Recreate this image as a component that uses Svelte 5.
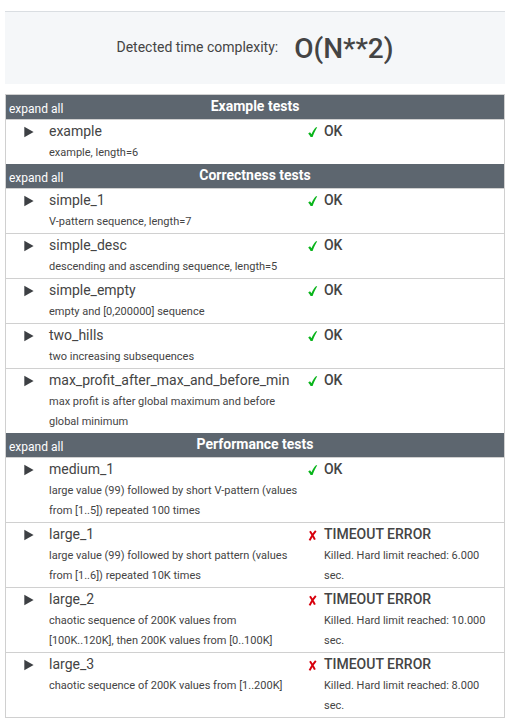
<script>
  const groups = [
    {
      title: 'Example tests',
      tests: [{ name: 'example', info: 'example, length=6', ok: true }]
    },
    {
      title: 'Correctness tests',
      tests: [
        { name: 'simple_1', info: 'V-pattern sequence, length=7', ok: true },
        { name: 'simple_desc', info: 'descending and ascending sequence, length=5', ok: true },
        { name: 'simple_empty', info: 'empty and [0,200000] sequence', ok: true },
        { name: 'two_hills', info: 'two increasing subsequences', ok: true },
        {
          name: 'max_profit_after_max_and_before_min',
          info: 'max profit is after global maximum and before global minimum',
          ok: true
        }
      ]
    },
    {
      title: 'Performance tests',
      tests: [
        {
          name: 'medium_1',
          info: 'large value (99) followed by short V-pattern (values from [1..5]) repeated 100 times',
          ok: true
        },
        {
          name: 'large_1',
          info: 'large value (99) followed by short pattern (values from [1..6]) repeated 10K times',
          ok: false,
          limit: '6.000'
        },
        {
          name: 'large_2',
          info: 'chaotic sequence of 200K values from [100K..120K], then 200K values from [0..100K]',
          ok: false,
          limit: '10.000'
        },
        {
          name: 'large_3',
          info: 'chaotic sequence of 200K values from [1..200K]',
          ok: false,
          limit: '8.000'
        }
      ]
    }
  ];
</script>

<main>
  <section class="complexity">
    <span>Detected time complexity:</span>
    <strong>O(N**2)</strong>
  </section>

  <table>
    <colgroup>
      <col class="col-toggle" />
      <col class="col-name" />
      <col class="col-mark" />
      <col class="col-result" />
    </colgroup>
    {#each groups as group}
      <tbody>
        <tr class="group">
          <th colspan="4" scope="rowgroup">
            <div class="bar">
              <button type="button" class="expand">expand all</button>
              <span>{group.title}</span>
            </div>
          </th>
        </tr>
        {#each group.tests as test}
          <tr class="test">
            <td class="toggle">
              <button type="button" aria-label="Expand {test.name}">
                <svg width="10" height="12" viewBox="0 0 10 12" aria-hidden="true">
                  <path d="M0.3 0.8 L9.6 6 L0.3 11.2 Z" fill="#3d4044" />
                </svg>
              </button>
            </td>
            <td>
              <div class="name">{test.name}</div>
              <div class="info">{test.info}</div>
            </td>
            <td class="mark">
              {#if test.ok}
                <svg width="10" height="12" viewBox="0 0 10 12" aria-hidden="true">
                  <path d="M0.2 7.4 L2 6.2 L3.5 8.2 C4.6 5.4 6 3.2 8 1.2 L9.2 1.2 C7.5 4 6 7.2 4.6 11 L2.6 11 C2 9.6 1.3 8.4 0.2 7.4 Z" fill="#08b41a" />
                </svg>
              {:else}
                <svg width="10" height="12" viewBox="0 0 10 12" aria-hidden="true">
                  <path d="M2 2.3 C3.8 4.9 5.4 7.6 6.9 10.6 M7.8 1.8 C5.4 4.5 3.2 7.7 1.6 11.4" fill="none" stroke="#d8000c" stroke-width="2" />
                </svg>
              {/if}
            </td>
            <td>
              <div class="status">{test.ok ? 'OK' : 'TIMEOUT ERROR'}</div>
              {#if test.limit}
                <div class="info">Killed. Hard limit reached: {test.limit} sec.</div>
              {/if}
            </td>
          </tr>
        {/each}
      </tbody>
    {/each}
  </table>
</main>

<style>
  :global(body) {
    margin: 0;
    background: #fff;
  }

  main {
    padding: 11px 7px 6px 5px;
    font-family: Roboto, 'Liberation Sans', sans-serif;
    font-size: 14px;
    color: #444;
  }

  .complexity {
    display: flex;
    align-items: flex-start;
    justify-content: center;
    gap: 16px;
    padding: 17px 0 15px;
    margin-bottom: 10px;
    border-top: 1px solid #dadee2;
    background: #f5f7f9;
    line-height: 36px;
  }

  .complexity strong {
    font-size: 28px;
    font-weight: 500;
    line-height: 40px;
  }

  table {
    width: 100%;
    table-layout: fixed;
    border: 1px solid #d0d0d0;
    border-spacing: 0;
  }

  .col-toggle {
    width: 43px;
  }

  .col-name {
    width: 52%;
  }

  .col-mark {
    width: 16px;
  }

  th,
  td {
    padding: 0;
    vertical-align: top;
    text-align: left;
  }

  td {
    padding-bottom: 1px;
  }

  th {
    border-bottom: 1px solid #d0d0d0;
    background: #5d666f;
    color: #fff;
  }

  .bar {
    display: grid;
    grid-template-columns: 1fr auto 1fr;
    padding: 0 3px;
    line-height: 22px;
    height: 24px;
  }

  button {
    border: 0;
    padding: 0;
    background: none;
    font: inherit;
    color: inherit;
    cursor: pointer;
  }

  .expand {
    justify-self: start;
    align-self: end;
    font-size: 12px;
    font-weight: 400;
    line-height: 20px;
  }

  .test + .test td {
    border-top: 1px solid #d0d0d0;
  }

  .toggle button {
    display: block;
    padding: 6px 0 0 18px;
  }

  svg {
    display: block;
  }

  .mark svg {
    margin-top: 6px;
  }

  .name,
  .status {
    padding-bottom: 1px;
    line-height: 22px;
  }

  .status {
    font-weight: 500;
  }

  .info {
    padding-right: 8px;
    font-size: 11px;
    line-height: 20px;
  }
</style>
